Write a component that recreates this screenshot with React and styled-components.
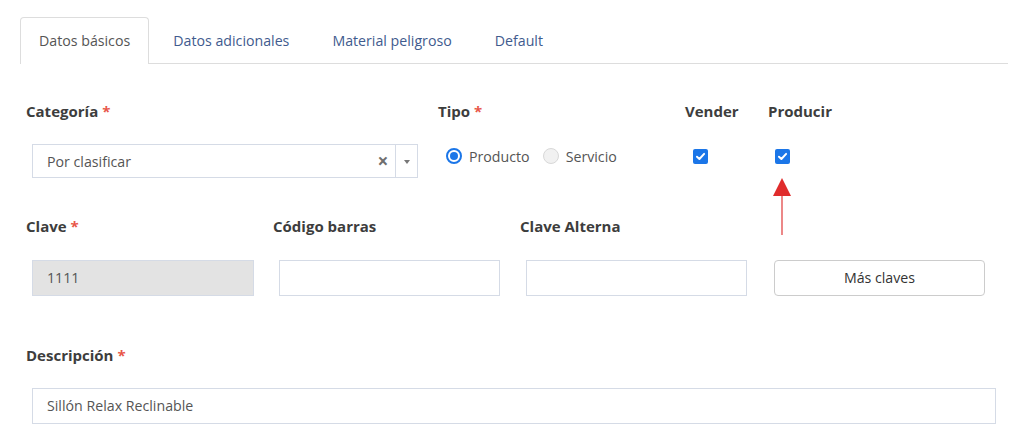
import React from "react";
import styled, { createGlobalStyle } from "styled-components";

const Global = createGlobalStyle`
  html, body { margin: 0; padding: 0; background: #fff; }
  body { font-family: "Open Sans", "Noto Sans", sans-serif; font-size: 14px; color: #333; }
  * { box-sizing: border-box; }
`;

const Page = styled.div`
  width: 1024px;
  height: 447px;
  padding: 17px 16px 0 20px;
  overflow: hidden;
`;

const TabBar = styled.div`
  display: flex;
  gap: 5px;
  border-bottom: 1px solid #dddddd;
`;

const Tab = styled.div`
  height: ${(p) => (p.$active ? 47 : 46)}px;
  margin-bottom: ${(p) => (p.$active ? -1 : 0)}px;
  line-height: 46px;
  padding: 0 18px;
  font-size: 14.2px;
  border: 1px solid ${(p) => (p.$active ? "#dddddd" : "transparent")};
  border-bottom: none;
  border-radius: 4px 4px 0 0;
  background: ${(p) => (p.$active ? "#fff" : "transparent")};
  color: ${(p) => (p.$active ? "#555" : "#3f5b8e")};
  white-space: nowrap;
`;

const Form = styled.div`
  padding-left: 6px;
`;

const Row = styled.div`
  display: grid;
  grid-template-columns: ${(p) => p.$cols};
  margin-top: ${(p) => p.$top}px;
`;

const Field = styled.div`
  position: relative;
  display: flex;
  flex-direction: column;
`;

const Label = styled.div`
  height: 20px;
  line-height: 20px;
  font-weight: 700;
  font-size: 15px;
  color: #3d3d3d;
  margin-bottom: ${(p) => p.$gap || 23}px;
  white-space: nowrap;
`;

const Star = styled.span`
  color: #e8574a;
  margin-left: 4px;
`;

const Select = styled.div`
  margin-left: 6px;
  width: 386px;
  height: 34px;
  border: 1px solid #d5dbe6;
  display: flex;
  align-items: center;
`;

const SelectText = styled.div`
  flex: 1;
  padding-left: 14px;
  color: #555;
  font-size: 14.2px;
`;

const Clear = styled.div`
  width: 22px;
  text-align: center;
  color: #6f6f6f;
  font-size: 19px;
  line-height: 20px;
  font-weight: 700;
  margin-right: 1px;
`;

const Caret = styled.div`
  width: 22px;
  height: 100%;
  border-left: 1px solid #d5dbe6;
  display: flex;
  align-items: center;
  justify-content: center;
  &::after {
    content: "";
    border-left: 3.5px solid transparent;
    border-right: 3.5px solid transparent;
    border-top: 4px solid #777;
    margin-top: 2px;
  }
`;

const Options = styled.div`
  display: flex;
  align-items: center;
  height: 24px;
  margin-left: ${(p) => p.$indent}px;
`;

const Radio = styled.span`
  width: 16px;
  height: 16px;
  border-radius: 50%;
  flex: none;
  border: ${(p) => (p.$checked ? "2px solid #1b76e8" : "1px solid #d8d8d8")};
  background: ${(p) => (p.$checked ? "#fff" : "#f1f1f1")};
  display: flex;
  align-items: center;
  justify-content: center;
  margin-right: 7px;
  &::after {
    content: "";
    display: ${(p) => (p.$checked ? "block" : "none")};
    width: 8px;
    height: 8px;
    border-radius: 50%;
    background: #1b76e8;
  }
`;

const OptionText = styled.span`
  color: #555;
  font-size: 14.2px;
  margin-right: 13px;
`;

const Check = styled.span`
  width: 15px;
  height: 15px;
  border-radius: 2px;
  background: #1b76e8;
  display: flex;
  align-items: center;
  justify-content: center;
`;

const Input = styled.div`
  margin-left: 6px;
  width: ${(p) => p.$w}px;
  height: 36px;
  border: 1px solid #d5dbe6;
  background: ${(p) => (p.$disabled ? "#e3e3e3" : "#fff")};
  padding-left: 14px;
  line-height: 34px;
  color: #555;
  font-size: 14.2px;
`;

const Button = styled.div`
  margin-left: 7px;
  width: 211px;
  height: 36px;
  border: 1px solid #cccccc;
  border-radius: 4px;
  background: #fff;
  text-align: center;
  line-height: 34px;
  color: #333;
  font-size: 14.2px;
`;

const Arrow = styled.svg`
  position: absolute;
  left: 5px;
  top: 77px;
`;

const CheckMark = () => (
  <svg width="11" height="11" viewBox="0 0 10 10">
    <path d="M1.8 5.2 L4 7.3 L8.3 2.6" fill="none" stroke="#fff" strokeWidth="1.8" strokeLinecap="round" strokeLinejoin="round" />
  </svg>
);

export default function App() {
  return (
    <>
      <Global />
      <Page>
        <TabBar>
          <Tab $active>Datos básicos</Tab>
          <Tab>Datos adicionales</Tab>
          <Tab>Material peligroso</Tab>
          <Tab>Default</Tab>
        </TabBar>
        <Form>
          <Row $cols="412px 247px 83px 1fr" $top={37}>
            <Field>
              <Label>Categoría<Star>*</Star></Label>
              <Select>
                <SelectText>Por clasificar</SelectText>
                <Clear>×</Clear>
                <Caret />
              </Select>
            </Field>
            <Field>
              <Label>Tipo<Star>*</Star></Label>
              <Options $indent={8}>
                <Radio $checked />
                <OptionText>Producto</OptionText>
                <Radio />
                <OptionText>Servicio</OptionText>
              </Options>
            </Field>
            <Field>
              <Label>Vender</Label>
              <Options $indent={8}>
                <Check><CheckMark /></Check>
              </Options>
            </Field>
            <Field>
              <Label>Producir</Label>
              <Options $indent={7}>
                <Check><CheckMark /></Check>
              </Options>
              <Arrow width="18" height="57" viewBox="0 0 18 57">
                <line x1="9" y1="17" x2="9" y2="57" stroke="#e86a6a" strokeWidth="1.6" />
                <polygon points="9,0 18,18 0,18" fill="#e02c2c" />
              </Arrow>
            </Field>
          </Row>
          <Row $cols="247px 247px 247px 1fr" $top={38}>
            <Field>
              <Label $gap={24}>Clave<Star>*</Star></Label>
              <Input $w={222} $disabled>1111</Input>
            </Field>
            <Field>
              <Label $gap={24}>Código barras</Label>
              <Input $w={221} />
            </Field>
            <Field>
              <Label $gap={24}>Clave Alterna</Label>
              <Input $w={221} />
            </Field>
            <Field>
              <Label $gap={24}>&nbsp;</Label>
              <Button>Más claves</Button>
            </Field>
          </Row>
          <Row $cols="1fr" $top={49}>
            <Field>
              <Label>Descripción<Star>*</Star></Label>
              <Input $w={964}>Sillón Relax Reclinable</Input>
            </Field>
          </Row>
        </Form>
      </Page>
    </>
  );
}
